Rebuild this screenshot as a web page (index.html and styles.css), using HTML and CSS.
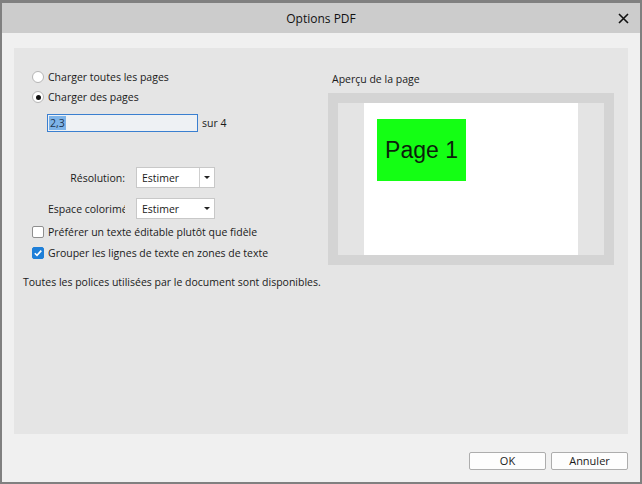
FILE: index.html
```html
<!DOCTYPE html>
<html lang="fr">
<head>
<meta charset="utf-8">
<title>Options PDF</title>
<link rel="stylesheet" href="styles.css">
</head>
<body>
<div class="window">
  <div class="titlebar">
    <span class="title">Options PDF</span>
    <span class="close">
      <svg width="11" height="11" viewBox="0 0 11 11"><path d="M1 1 L10 10 M10 1 L1 10" stroke="#111" stroke-width="1.6" fill="none"/></svg>
    </span>
  </div>
  <div class="content">
    <div class="panel">
      <div class="top">
        <div class="left">
          <div class="row radio-row"><span class="radio"></span><span>Charger toutes les pages</span></div>
          <div class="row radio-row"><span class="radio on"></span><span>Charger des pages</span></div>
          <div class="pages-row">
            <div class="input"><span class="sel">2,3</span></div>
            <span class="of">sur 4</span>
          </div>
          <div class="field res">
            <span class="flabel">Résolution:</span>
            <div class="select split"><span class="val">Estimer</span><span class="arrow"></span></div>
          </div>
          <div class="field color">
            <span class="flabel clip"><span class="cliptext">Espace colorimé</span></span>
            <div class="select"><span class="val">Estimer</span><span class="arrow"></span></div>
          </div>
          <div class="row check-row first"><span class="check"></span><span>Préférer un texte éditable plutôt que fidèle</span></div>
          <div class="row check-row"><span class="check on"><svg width="10" height="10" viewBox="0 0 10 10"><path d="M1.8 5.2 L4 7.4 L8.3 2.6" stroke="#fff" stroke-width="1.6" fill="none"/></svg></span><span>Grouper les lignes de texte en zones de texte</span></div>
        </div>
        <div class="right">
          <div class="plabel">Aperçu de la page</div>
          <div class="preview">
            <div class="inner">
              <div class="page">
                <div class="green">Page 1</div>
              </div>
            </div>
          </div>
        </div>
      </div>
      <div class="msg">Toutes les polices utilisées par le document sont disponibles.</div>
    </div>
  </div>
  <div class="footer">
    <button class="btn">OK</button>
    <button class="btn">Annuler</button>
  </div>
</div>
</body>
</html>
```
FILE: styles.css
```css
* { box-sizing: border-box; }
html, body { margin: 0; padding: 0; }
body {
  font-family: "Open Sans", "Noto Sans", sans-serif;
  font-size: 10.5px;
  color: #1a1a1a;
}
.window {
  width: 642px;
  height: 484px;
  background: #f0f0f0;
  border: 2px solid #808080;
  border-top-width: 3px;
  display: flex;
  flex-direction: column;
}
.titlebar {
  height: 30px;
  background: #cccccc;
  display: flex;
  align-items: center;
  justify-content: center;
  position: relative;
  flex: none;
}
.title { font-size: 12px; color: #111; }
.close {
  position: absolute;
  right: 11px;
  top: 10px;
  width: 11px;
  height: 11px;
  display: flex;
}
.content {
  padding: 15px 12px 0 12px;
  flex: none;
}
.panel {
  background: #e5e5e5;
  height: 386px;
  display: flex;
  flex-direction: column;
}
.top {
  display: flex;
}
.left {
  width: 300px;
  padding-left: 18px;
  padding-top: 19px;
}
.row {
  display: flex;
  align-items: center;
  height: 20px;
  gap: 4px;
}
.radio {
  width: 12px;
  height: 12px;
  border-radius: 50%;
  background: #fff;
  border: 1px solid #b5b5b5;
  display: flex;
  align-items: center;
  justify-content: center;
  flex: none;
}
.radio.on::after {
  content: "";
  width: 5px;
  height: 5px;
  border-radius: 50%;
  background: #111;
}
.pages-row {
  display: flex;
  align-items: center;
  margin-top: 7px;
  margin-left: 15px;
  gap: 4px;
}
.input {
  width: 151px;
  height: 18px;
  border: 1px solid #3a7fd0;
  background: #eef1f4;
  display: flex;
  align-items: center;
  padding-left: 1px;
}
.sel {
  background: #7db3e8;
  color: #1d3550;
  line-height: 14px;
  padding: 0 1px;
}
.field {
  display: flex;
  align-items: center;
}
.field.res { margin-top: 35px; }
.field.color { margin-top: 10px; }
.flabel {
  width: 93px;
  text-align: right;
  white-space: nowrap;
  flex: none;
}
.flabel.clip {
  display: flex;
  justify-content: flex-end;
}
.cliptext {
  display: block;
  width: 77px;
  overflow: hidden;
  white-space: nowrap;
}
.select {
  margin-left: 11px;
  width: 79px;
  height: 21px;
  background: #fff;
  border: 1px solid #c8c8c8;
  display: flex;
  align-items: center;
}
.val { padding-left: 5px; flex: 1; }
.arrow {
  width: 15px;
  height: 100%;
  display: flex;
  align-items: center;
  justify-content: center;
}
.arrow::after {
  content: "";
  border-left: 3px solid transparent;
  border-right: 3px solid transparent;
  border-top: 3px solid #222;
}
.select.split .arrow { border-left: 1px solid #cfcfcf; }
.check-row.first { margin-top: 2px; }
.check-row { height: 21px; }
.check {
  width: 12px;
  height: 12px;
  border: 1px solid #8f8f8f;
  background: #fff;
  border-radius: 2px;
  flex: none;
  display: flex;
  align-items: center;
  justify-content: center;
}
.check.on {
  background: #1e7fd8;
  border-color: #1e7fd8;
}
.right {
  margin-left: auto;
  margin-right: 14px;
  width: 286px;
  padding-top: 24px;
}
.plabel { height: 21px; padding-left: 4px; }
.preview {
  background: #d4d4d4;
  height: 172px;
  padding: 10px;
}
.inner {
  background: #e4e4e4;
  height: 100%;
  padding-left: 26px;
}
.page {
  background: #fff;
  width: 214px;
  height: 100%;
  padding: 16px 0 0 13px;
}
.green {
  background: #14ff14;
  width: 89px;
  height: 62px;
  font-family: "Liberation Sans", Arial, sans-serif;
  font-size: 23px;
  color: #0c1f0c;
  display: flex;
  align-items: center;
  justify-content: center;
}
.msg {
  margin-top: 10px;
  padding-left: 9px;
}
.footer {
  display: flex;
  justify-content: flex-end;
  gap: 5px;
  padding: 18px 12px 0 0;
}
.btn {
  width: 77px;
  height: 18px;
  background: #fdfdfd;
  border: 1px solid #adadad;
  border-radius: 2px;
  font-family: "Open Sans", "Noto Sans", sans-serif;
  font-size: 11px;
  color: #1a1a1a;
  padding: 0;
  line-height: 14px;
}
```
